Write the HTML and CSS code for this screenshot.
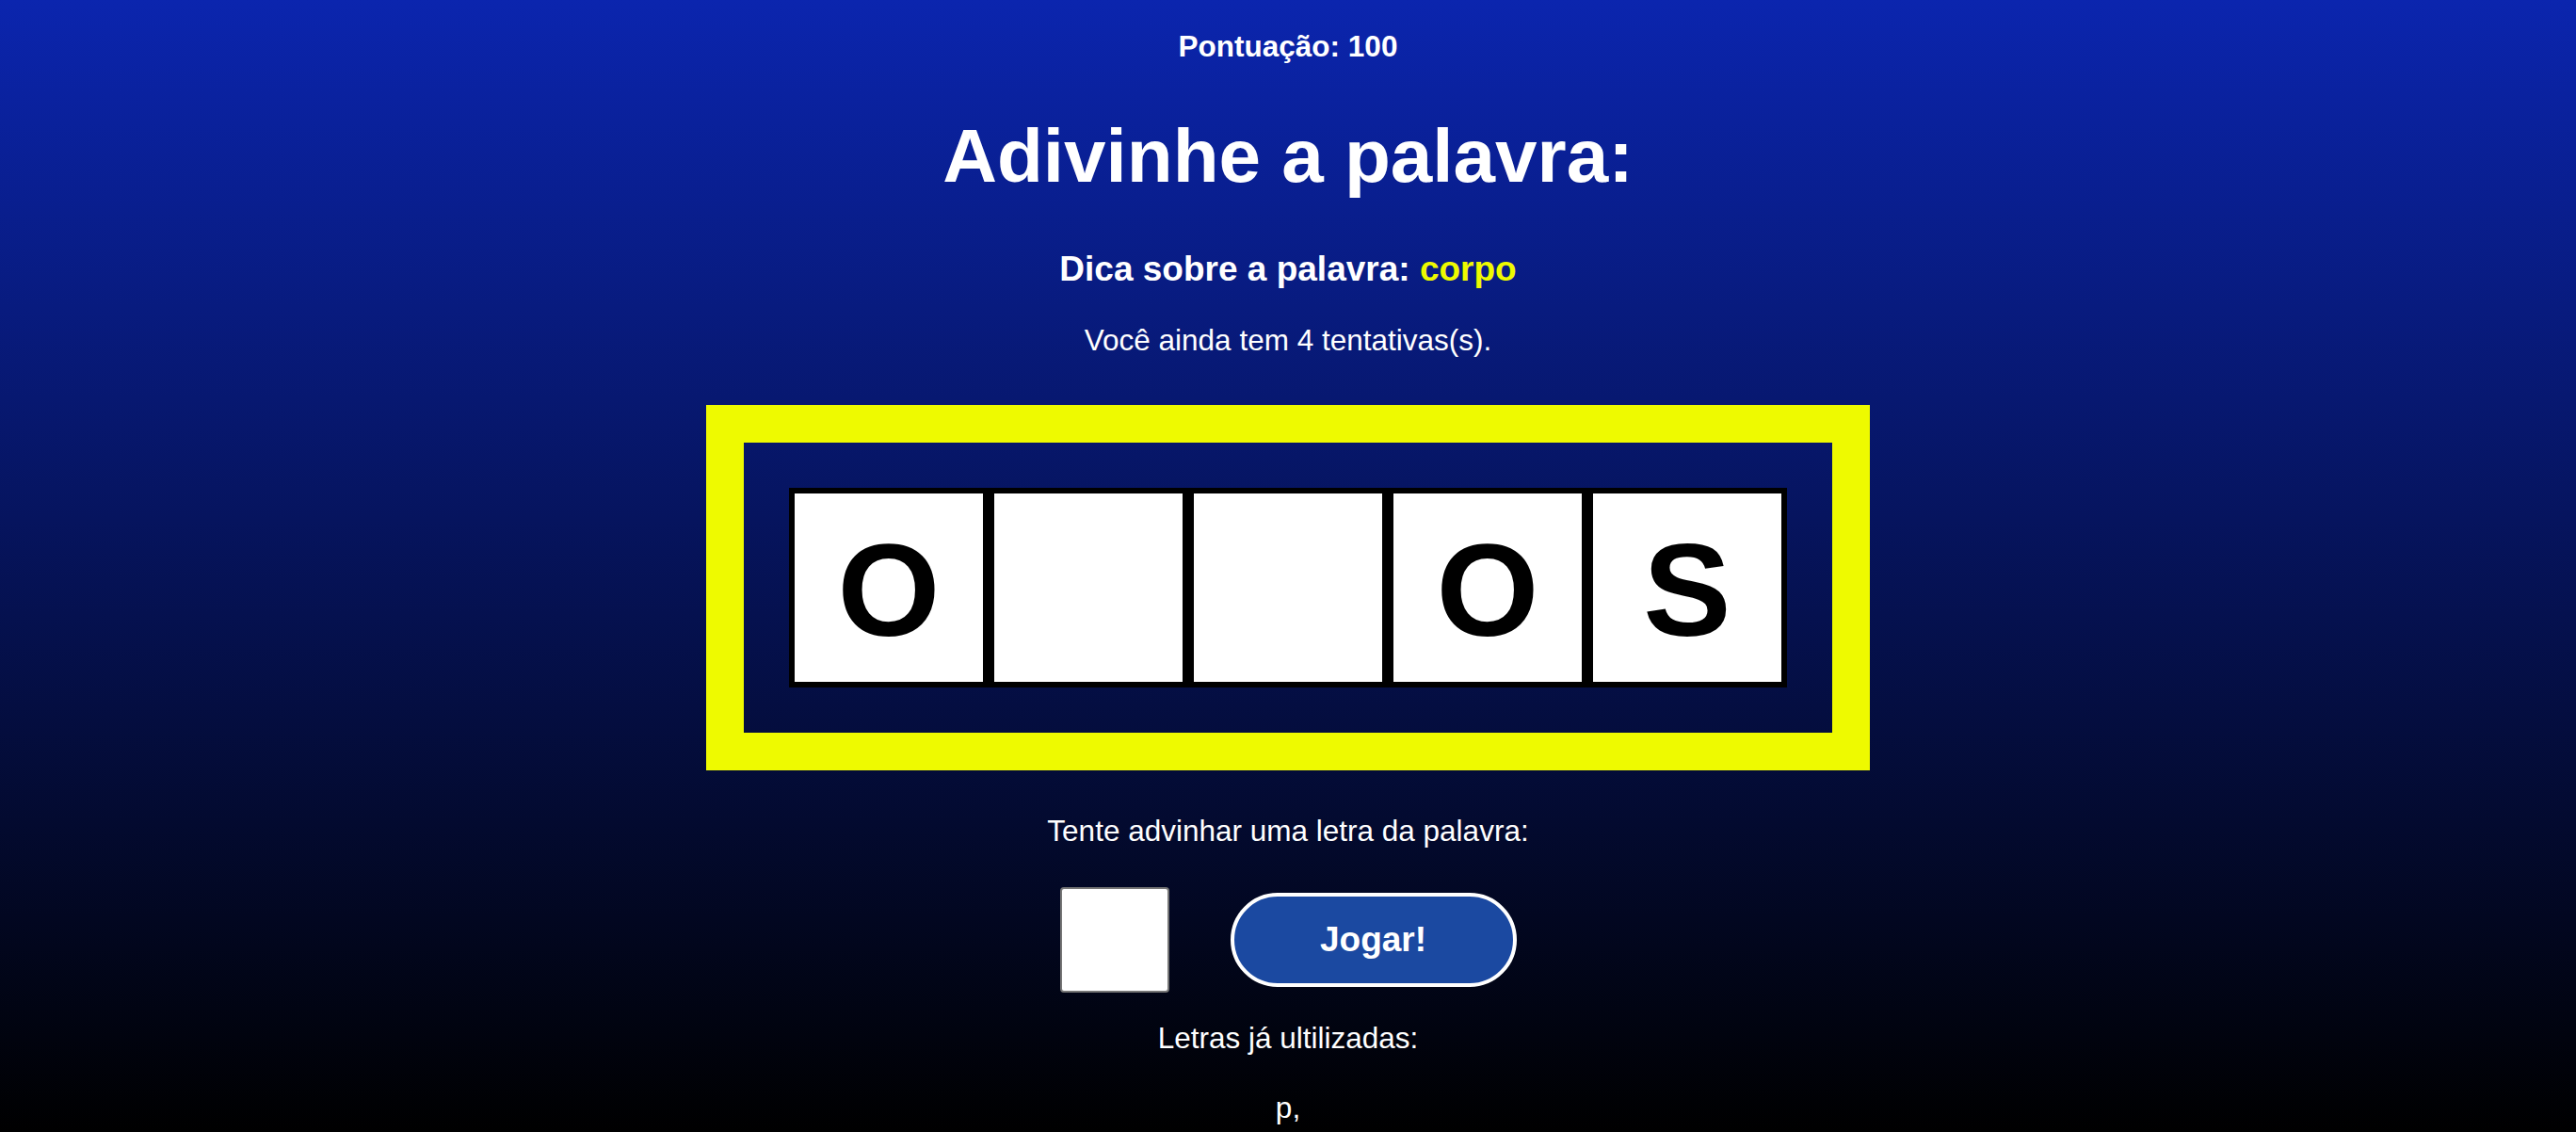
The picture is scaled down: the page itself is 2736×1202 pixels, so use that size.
FILE: index.html
```html
<!DOCTYPE html>
<html lang="pt-BR">
<head>
<meta charset="utf-8">
<title>Adivinhe a palavra</title>
<link rel="stylesheet" href="styles.css">
</head>
<body>
<main class="game">
  <p class="score">Pontuação: 100</p>
  <h1 class="title">Adivinhe a palavra:</h1>
  <p class="hint">Dica sobre a palavra: <span class="hint-word">corpo</span></p>
  <p class="tries">Você ainda tem 4 tentativas(s).</p>
  <section class="board">
    <div class="cells">
      <div class="cell">O</div>
      <div class="cell"></div>
      <div class="cell"></div>
      <div class="cell">O</div>
      <div class="cell">S</div>
    </div>
  </section>
  <p class="prompt">Tente advinhar uma letra da palavra:</p>
  <form class="guess-row" onsubmit="return false;">
    <input class="guess-input" type="text" maxlength="1" aria-label="Letra">
    <button class="play-btn" type="submit">Jogar!</button>
  </form>
  <p class="used-label">Letras já ultilizadas:</p>
  <p class="used-letters">p,</p>
</main>
</body>
</html>
```
FILE: styles.css
```css
html, body {
  margin: 0;
  padding: 0;
}

body {
  min-height: 100vh;
  background: linear-gradient(180deg, #0b25ae 0%, #000000 100%);
  color: #ffffff;
  font-family: "Liberation Sans", Arial, sans-serif;
}

.game {
  display: flex;
  flex-direction: column;
  align-items: center;
  text-align: center;
}

.score {
  margin: 31px 0 0;
  font-size: 31.5px;
  line-height: 36px;
  font-weight: bold;
}

.title {
  margin: 53px 0 0;
  font-size: 80px;
  line-height: 92px;
  font-weight: bold;
}

.hint {
  margin: 53px 0 0;
  font-size: 37px;
  line-height: 42px;
  font-weight: bold;
}

.hint-word {
  color: #eefa00;
}

.tries {
  margin: 36px 0 0;
  font-size: 31.5px;
  line-height: 36px;
}

.board {
  margin-top: 51px;
  border: 40px solid #eefa00;
  padding: 48px;
}

.cells {
  display: flex;
}

.cell {
  width: 200px;
  height: 194px;
  padding-top: 6px;
  border: 6px solid #000000;
  background: #ffffff;
  color: #000000;
  display: flex;
  align-items: center;
  justify-content: center;
  font-size: 140px;
  line-height: 1;
  font-weight: bold;
}

.prompt {
  margin: 46px 0 0;
  font-size: 31.5px;
  line-height: 36px;
}

.guess-row {
  margin: 42px 0 0;
  display: flex;
  align-items: center;
  gap: 65px;
}

.guess-input {
  box-sizing: border-box;
  width: 116px;
  height: 112px;
  margin: 0;
  border: 2px solid #767676;
  border-radius: 4px;
  background: #ffffff;
  font-family: "Liberation Sans", Arial, sans-serif;
  font-size: 60px;
  text-align: center;
}

.play-btn {
  box-sizing: border-box;
  width: 304px;
  height: 100px;
  margin: 0;
  border: 4px solid #ffffff;
  border-radius: 50px;
  background: #1b49a1;
  color: #ffffff;
  font-family: "Liberation Sans", Arial, sans-serif;
  font-size: 37px;
  font-weight: bold;
  cursor: pointer;
}

.used-label {
  margin: 30px 0 0;
  font-size: 31.5px;
  line-height: 36px;
}

.used-letters {
  margin: 38px 0 0;
  font-size: 31.5px;
  line-height: 36px;
}
```
